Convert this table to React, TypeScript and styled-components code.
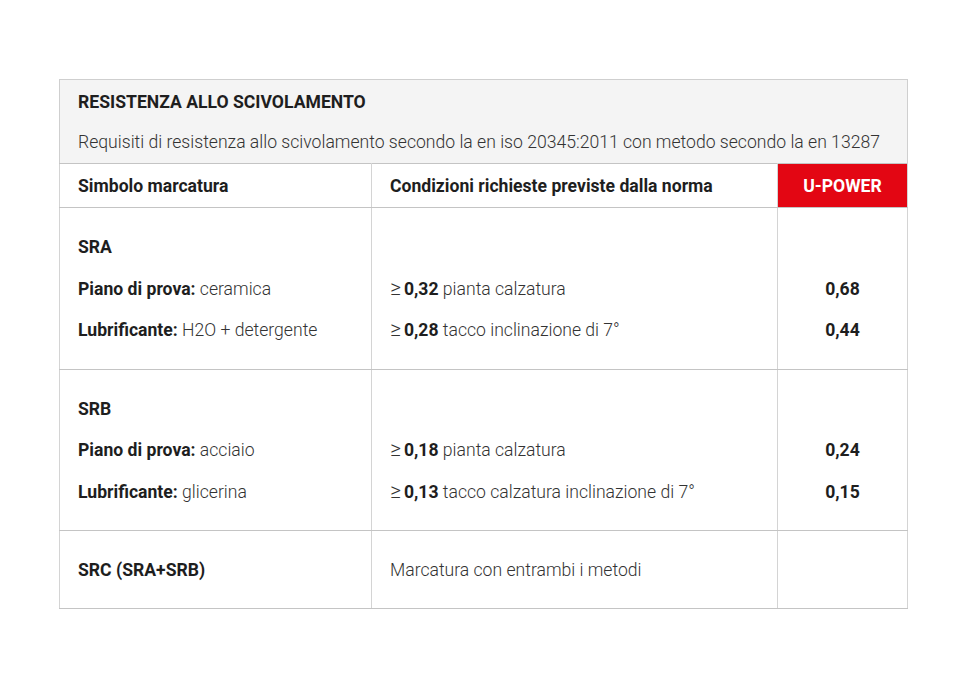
import React from "react";
import styled, { createGlobalStyle } from "styled-components";

const Global = createGlobalStyle`
  html, body { margin: 0; padding: 0; background: #fff; }
  body { font-family: Roboto, "Liberation Sans", sans-serif; color: #222; }
`;

const Page = styled.div`
  padding: 79px 0 0 59px;
`;

const Table = styled.table`
  width: 849px;
  border-collapse: collapse;
  table-layout: fixed;
  font-size: 17.6px;
  line-height: 24px;
`;

const Caption = styled.caption`
  background: #f4f4f4;
  border: 1px solid #cfcfcf;
  border-bottom: none;
  text-align: left;
  padding: 10px 18px 9px;
`;

const Title = styled.div`
  font-weight: 700;
  color: #1e1e1e;
  margin-bottom: 16px;
`;

const Subtitle = styled.div`
  font-weight: 300;
  color: #333;
`;

const Th = styled.th<{ $accent?: boolean; $center?: boolean }>`
  border-top: 1px solid #c4c4c4;
  border-bottom: 1px solid #c4c4c4;
  border-left: 1px solid #d4d4d4;
  border-right: 1px solid #d4d4d4;
  padding: 9.5px 18px;
  font-weight: 700;
  color: ${(p) => (p.$accent ? "#fff" : "#1e1e1e")};
  background: ${(p) => (p.$accent ? "#e30613" : "#fff")};
  text-align: ${(p) => (p.$center ? "center" : "left")};
`;

const Td = styled.td<{ $center?: boolean; $pad?: string }>`
  border-top: 1px solid #c4c4c4;
  border-bottom: 1px solid #c4c4c4;
  border-left: 1px solid #d4d4d4;
  border-right: 1px solid #d4d4d4;
  padding: ${(p) => p.$pad || "27px 18px 26.5px"};
  vertical-align: top;
  text-align: ${(p) => (p.$center ? "center" : "left")};
  font-weight: 300;
  color: #333;
`;

const Stack = styled.div`
  display: flex;
  flex-direction: column;
  gap: 17.5px;
`;

const Line = styled.div`
  min-height: 24px;
  height: 24px;
`;

const B = styled.b`
  font-weight: 700;
  color: #1e1e1e;
`;

const Gte = styled.span`
  font-size: 21px;
  line-height: 0;
  margin-right: 3px;
`;

type Block = {
  code: string;
  rows: { label: string; value: string; min: string; cond: string; res: string }[];
};

const blocks: Block[] = [
  {
    code: "SRA",
    rows: [
      { label: "Piano di prova:", value: "ceramica", min: "0,32", cond: "pianta calzatura", res: "0,68" },
      { label: "Lubrificante:", value: "H2O + detergente", min: "0,28", cond: "tacco inclinazione di 7°", res: "0,44" },
    ],
  },
  {
    code: "SRB",
    rows: [
      { label: "Piano di prova:", value: "acciaio", min: "0,18", cond: "pianta calzatura", res: "0,24" },
      { label: "Lubrificante:", value: "glicerina", min: "0,13", cond: "tacco calzatura inclinazione di 7°", res: "0,15" },
    ],
  },
];

export default function App() {
  return (
    <Page>
      <Global />
      <Table>
        <Caption>
          <Title>RESISTENZA ALLO SCIVOLAMENTO</Title>
          <Subtitle>
            Requisiti di resistenza allo scivolamento secondo la en iso 20345:2011 con metodo secondo la en 13287
          </Subtitle>
        </Caption>
        <colgroup>
          <col style={{ width: 312 }} />
          <col style={{ width: 406 }} />
          <col />
        </colgroup>
        <thead>
          <tr>
            <Th>Simbolo marcatura</Th>
            <Th>Condizioni richieste previste dalla norma</Th>
            <Th $accent $center>U-POWER</Th>
          </tr>
        </thead>
        <tbody>
          {blocks.map((b) => (
            <tr key={b.code}>
              <Td>
                <Stack>
                  <Line>
                    <B>{b.code}</B>
                  </Line>
                  {b.rows.map((r) => (
                    <Line key={r.label}>
                      <B>{r.label}</B> {r.value}
                    </Line>
                  ))}
                </Stack>
              </Td>
              <Td>
                <Stack>
                  <Line />
                  {b.rows.map((r) => (
                    <Line key={r.min}>
                      <Gte>≥</Gte><B>{r.min}</B> {r.cond}
                    </Line>
                  ))}
                </Stack>
              </Td>
              <Td $center>
                <Stack>
                  <Line />
                  {b.rows.map((r) => (
                    <Line key={r.res}>
                      <B>{r.res}</B>
                    </Line>
                  ))}
                </Stack>
              </Td>
            </tr>
          ))}
          <tr>
            <Td $pad="27px 18px 26px">
              <B>SRC (SRA+SRB)</B>
            </Td>
            <Td $pad="27px 18px 26px">Marcatura con entrambi i metodi</Td>
            <Td $pad="27px 18px 26px" />
          </tr>
        </tbody>
      </Table>
    </Page>
  );
}
